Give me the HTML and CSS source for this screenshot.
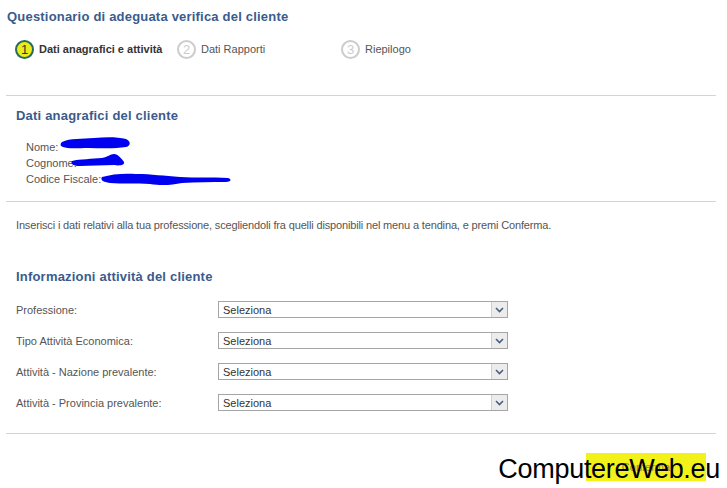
FILE: index.html
```html
<!DOCTYPE html>
<html lang="it">
<head>
    <meta charset="UTF-8">
    <title>Questionario di adeguata verifica del cliente</title>
    <link rel="stylesheet" href="styles.css">
</head>
<body>
    <div class="page">
        <h1 class="title">Questionario di adeguata verifica del cliente</h1>

        <div class="steps">
            <div class="step step-active"><span class="num">1</span>Dati anagrafici e attività</div>
            <div class="step step-two"><span class="num">2</span>Dati Rapporti</div>
            <div class="step"><span class="num">3</span>Riepilogo</div>
        </div>

        <hr class="sep sep-top">

        <h2 class="section-title">Dati anagrafici del cliente</h2>
        <div class="client">
            <div class="client-row">Nome:
                <svg class="blot blot-nome" width="72" height="14" viewBox="0 0 72 14"><path d="M2 6 C10 2 22 3 34 2 C46 1 58 1 66 3 C71 5 71 10 66 11 C54 13 40 12 28 12 C18 12 8 13 3 11 C0 10 0 8 2 6 Z" fill="#0000f0"/></svg>
            </div>
            <div class="client-row">Cognome:
                <svg class="blot blot-cognome" width="56" height="14" viewBox="0 0 56 14"><path d="M2 8 C10 6 22 6 32 5 C38 4 40 1 44 1 C48 1 52 6 54 9 C55 12 50 13 44 12 C32 12 20 13 10 13 C4 13 0 11 2 8 Z" fill="#0000f0"/></svg>
            </div>
            <div class="client-row">Codice Fiscale:
                <svg class="blot blot-cf" width="132" height="16" viewBox="0 0 132 16"><path d="M2 6 C12 3 24 2 36 3 C52 3 64 5 80 6 C96 7 112 6 128 7 C132 8 131 11 126 11 C112 11 96 11 82 12 C72 14 62 15 50 13 C36 12 22 13 10 12 C3 11 0 9 2 6 Z" fill="#0000f0"/></svg>
            </div>
        </div>

        <hr class="sep sep-mid">

        <p class="intro">Inserisci i dati relativi alla tua professione, scegliendoli fra quelli disponibili nel menu a tendina, e premi Conferma.</p>

        <h2 class="section-title section-info">Informazioni attività del cliente</h2>
        <div class="form">
            <div class="form-row">
                <label>Professione:</label>
                <div class="select"><span>Seleziona</span><span class="arrow"><svg width="9" height="6" viewBox="0 0 9 6"><path d="M1 1 L4.5 4.5 L8 1" fill="none" stroke="#4a5f80" stroke-width="1.6"/></svg></span></div>
            </div>
            <div class="form-row">
                <label>Tipo Attività Economica:</label>
                <div class="select"><span>Seleziona</span><span class="arrow"><svg width="9" height="6" viewBox="0 0 9 6"><path d="M1 1 L4.5 4.5 L8 1" fill="none" stroke="#4a5f80" stroke-width="1.6"/></svg></span></div>
            </div>
            <div class="form-row">
                <label>Attività - Nazione prevalente:</label>
                <div class="select"><span>Seleziona</span><span class="arrow"><svg width="9" height="6" viewBox="0 0 9 6"><path d="M1 1 L4.5 4.5 L8 1" fill="none" stroke="#4a5f80" stroke-width="1.6"/></svg></span></div>
            </div>
            <div class="form-row">
                <label>Attività - Provincia prevalente:</label>
                <div class="select"><span>Seleziona</span><span class="arrow"><svg width="9" height="6" viewBox="0 0 9 6"><path d="M1 1 L4.5 4.5 L8 1" fill="none" stroke="#4a5f80" stroke-width="1.6"/></svg></span></div>
            </div>
        </div>

        <hr class="sep sep-bottom">

        <div class="actions">
            <button class="confirm">Conferma</button>
            <div class="watermark">ComputereWeb.eu</div>
        </div>
    </div>
</body>
</html>
```

FILE: styles.css
```css
* {
    margin: 0;
    padding: 0;
    box-sizing: border-box;
}

body {
    font-family: "Liberation Sans", Arial, sans-serif;
    font-size: 11px;
    color: #555;
    background: #fff;
}

.page {
    width: 727px;
    height: 488px;
    padding: 9px 11px 0 6px;
    overflow: hidden;
}

.title {
    color: #3b5b8c;
    font-size: 13px;
    font-weight: bold;
    letter-spacing: 0.2px;
    padding-left: 1px;
    line-height: 16px;
}

.steps {
    display: flex;
    align-items: center;
    margin-top: 14px;
    padding-left: 9px;
    height: 20px;
}

.step {
    display: flex;
    align-items: center;
    color: #555;
}

.step .num {
    width: 19px;
    height: 19px;
    border-radius: 50%;
    border: 2px solid #ccc;
    color: #ccc;
    font-size: 13px;
    font-weight: normal;
    display: flex;
    align-items: center;
    justify-content: center;
    margin-right: 5px;
}

.step-active {
    color: #333;
    font-weight: bold;
    width: 162px;
}

.step-active .num {
    background: #e8ec1a;
    border-color: #2b6a5a;
    color: #1f3a2a;
}

.step-two {
    width: 164px;
}

.sep {
    border: 0;
    border-top: 1px solid #d4d4d4;
}

.sep-top {
    margin-top: 36px;
}

.section-title {
    color: #3b5b8c;
    font-size: 13px;
    font-weight: bold;
    letter-spacing: 0.2px;
    line-height: 16px;
    margin: 12px 0 0 10px;
}

.client {
    margin: 15px 0 0 20px;
}

.client-row {
    position: relative;
    line-height: 16px;
}

.blot {
    position: absolute;
    top: 0;
}

.blot-nome {
    left: 34px;
    top: -3px;
}

.blot-cognome {
    left: 44px;
    top: -2px;
}

.blot-cf {
    left: 74px;
    top: 0;
}

.sep-mid {
    margin-top: 14px;
}

.intro {
    margin: 16px 0 0 10px;
    line-height: 14px;
    letter-spacing: -0.15px;
}

.section-info {
    margin-top: 37px;
}

.form {
    margin: 16px 0 0 10px;
    display: flex;
    flex-direction: column;
    gap: 14px;
}

.form-row {
    display: flex;
    align-items: center;
    height: 17px;
}

.form-row label {
    width: 202px;
    color: #555;
}

.select {
    width: 290px;
    height: 17px;
    border: 1px solid #a5a5a5;
    display: flex;
    align-items: center;
    justify-content: space-between;
    color: #333;
    padding-left: 4px;
}

.select .arrow {
    width: 16px;
    height: 15px;
    background: #ececec;
    border-left: 1px solid #d0d0d0;
    display: flex;
    align-items: center;
    justify-content: center;
}

.sep-bottom {
    margin-top: 22px;
}

.actions {
    position: relative;
    display: flex;
    justify-content: flex-end;
    margin-top: 19px;
    padding-right: 10px;
}

.confirm {
    width: 120px;
    height: 28px;
    background: #f2f21a;
    border: 0;
    color: #8a8a40;
    font-family: "Liberation Sans", Arial, sans-serif;
    font-size: 11px;
}

.watermark {
    position: absolute;
    right: -4px;
    top: 1px;
    font-size: 27px;
    color: #000;
    letter-spacing: -0.3px;
}
```
